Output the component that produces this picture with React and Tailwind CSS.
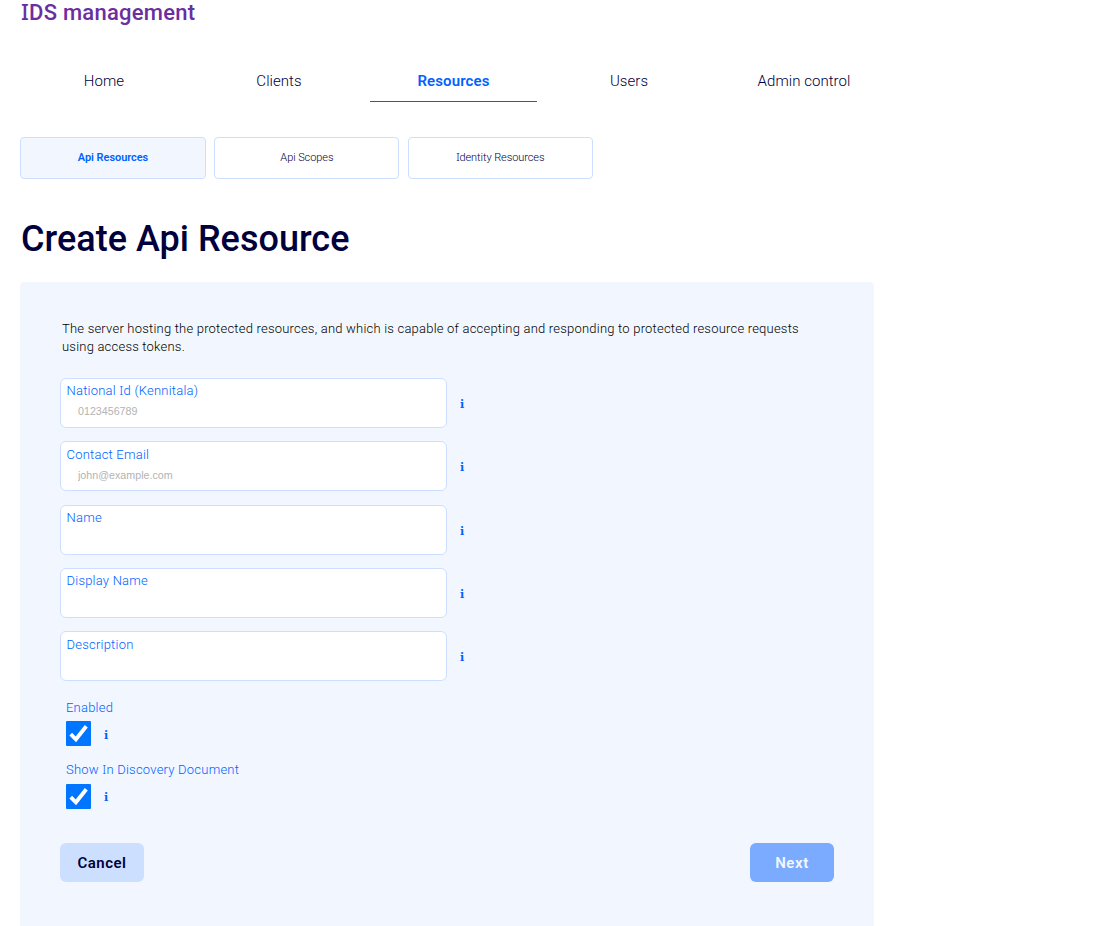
import { Fragment } from "react";

// Draws a capital "I" at the start of a word with crossbars.
function Txt({ children }) {
  return children.split(/\bI/).map((part, i) => (
    <Fragment key={i}>
      {i > 0 && <span className="font-['Noto_Sans'] leading-none">I</span>}
      {part}
    </Fragment>
  ));
}

const tabs = ["Home", "Clients", "Resources", "Users", "Admin control"];
const subTabs = ["Api Resources", "Api Scopes", "Identity Resources"];
const fields = [
  ["National Id (Kennitala)", "0123456789"],
  ["Contact Email", "john@example.com"],
  ["Name", ""],
  ["Display Name", ""],
  ["Description", ""],
];

function Info() {
  return (
    <span className="mt-1 w-[5px] text-center font-['DejaVu_Serif',serif] text-[11px] leading-[14px] font-bold text-[#0061ff]">
      i
    </span>
  );
}

function Field({ label, placeholder }) {
  return (
    <div className="flex items-center gap-[12.5px]">
      <label className="flex h-[50px] w-[387px] flex-col rounded-md border border-[#ccdfff] bg-white pt-[3.4px] pl-[5.5px]">
        <span className="text-[13px] leading-[18px] font-light tracking-[0.22px] text-[#0061ff]">
          <Txt>{label}</Txt>
        </span>
        <input
          className="mt-[2.1px] ml-[11.5px] h-[18px] w-[340px] bg-transparent font-['Liberation_Sans',sans-serif] text-[10.7px] outline-none placeholder:text-[#b3b3b3]"
          placeholder={placeholder}
        />
      </label>
      <Info />
    </div>
  );
}

function Check({ label }) {
  return (
    <div className="flex h-[62.5px] flex-col pl-1.5">
      <span className="text-[13px] leading-[18px] font-light tracking-[0.22px] text-[#0061ff]">
        <Txt>{label}</Txt>
      </span>
      <div className="mt-[4.8px] flex items-center gap-[12.5px]">
        <svg className="size-[25px]" viewBox="0 0 25 25">
          <rect width="25" height="25" rx="1" fill="#0075ff" />
          <path d="M4.7 13.2l5.2 5.1L20.3 5.2" fill="none" stroke="#fff" strokeWidth="3.8" />
        </svg>
        <Info />
      </div>
    </div>
  );
}

export default function App() {
  return (
    <div className="h-[926px] w-full bg-white pl-5 font-['Roboto',sans-serif] text-[#00003c]">
      <header className="h-[61px] pl-px text-[22px] leading-[22px] font-medium tracking-[0.25px] text-[#6a2ea0]">
        <Txt>IDS management</Txt>
      </header>
      <nav className="flex gap-2">
        {tabs.map((t) => (
          <a
            key={t}
            className={
              t === "Resources"
                ? "h-[41px] w-[167px] border-b border-[#0061ff] text-center text-[15px] leading-10 font-semibold tracking-[0.12px] text-[#0061ff]"
                : "h-[41px] w-[167px] pl-px text-center text-[15px] leading-10 font-light tracking-[0.05px]"
            }
          >
            {t}
          </a>
        ))}
      </nav>
      <div className="mt-[35px] grid w-[573px] grid-cols-[186px_185px_185px] gap-x-[8.4px]">
        {subTabs.map((t, i) => (
          <button
            key={t}
            className={
              i === 0
                ? "h-[42px] rounded border border-[#ccdfff] bg-[#f2f7ff] text-[11px] font-semibold tracking-[-0.06px] text-[#0061ff]"
                : "h-[42px] rounded border border-[#ccdfff] bg-white text-[11px] font-light tracking-[-0.08px]"
            }
          >
            <Txt>{t}</Txt>
          </button>
        ))}
      </div>
      <h1 className="mt-[36px] h-[67px] pl-px text-[36px] leading-[48px] font-medium tracking-[0.02px]">
        Create Api Resource
      </h1>
      <main className="h-[644px] w-[854px] rounded-t bg-[#f2f7ff] px-10 pt-[38px]">
        <p className="w-[760px] pl-0.5 text-[13px] leading-[18px] font-light tracking-[0.21px] text-black">
          The server hosting the protected resources, and which is capable of accepting and
          responding to protected resource requests using access tokens.
        </p>
        <div className="mt-[22px] flex flex-col gap-[13.3px]">
          {fields.map(([label, placeholder]) => (
            <Field key={label} label={label} placeholder={placeholder} />
          ))}
        </div>
        <div className="mt-[17.4px]">
          <Check label="Enabled" />
          <Check label="Show In Discovery Document" />
        </div>
        <div className="mt-[19.6px] flex justify-between">
          <button className="h-[39px] w-[84px] rounded-md bg-[#ccdfff] pt-px text-[15px] font-semibold tracking-[0.5px]">
            Cancel
          </button>
          <button className="h-[39px] w-[84px] rounded-md bg-[#7aabff] pt-px text-[15px] font-semibold tracking-[0.6px] text-[#f2f7ff]">
            Next
          </button>
        </div>
      </main>
    </div>
  );
}
